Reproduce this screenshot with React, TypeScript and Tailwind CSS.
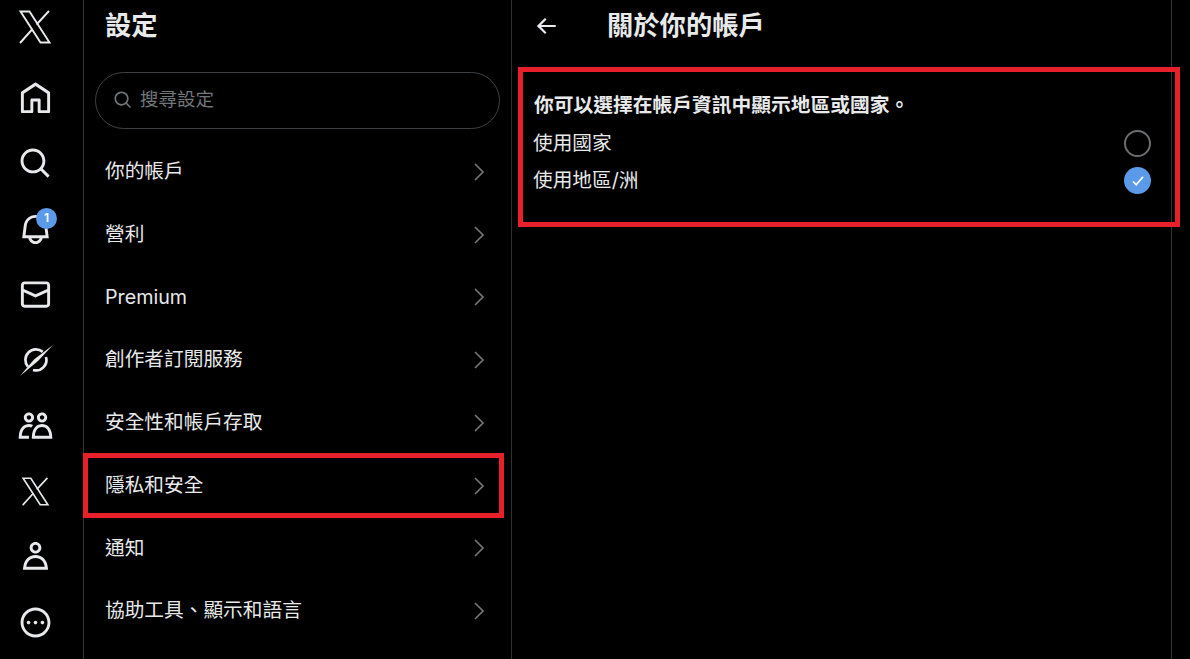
const navIcons = [
  { id: "home", d: "M21.591 7.146L12.52 1.157c-.316-.21-.724-.21-1.04 0l-9.071 5.99c-.26.173-.409.456-.409.757v13.183c0 .502.418.913.929.913h6.638c.511 0 .929-.41.929-.913v-7.075h3.008v7.075c0 .502.418.913.929.913h6.639c.51 0 .928-.41.928-.913V7.904c0-.301-.158-.584-.408-.758zM20 20l-4.5.01.011-7.097c0-.502-.418-.913-.928-.913H9.44c-.511 0-.929.41-.929.913L8.5 20H4V8.773l8.011-5.342L20 8.764z" },
  { id: "search", d: "M10.25 3.75c-3.59 0-6.5 2.91-6.5 6.5s2.91 6.5 6.5 6.5c1.795 0 3.419-.726 4.596-1.904 1.178-1.177 1.904-2.801 1.904-4.596 0-3.59-2.91-6.5-6.5-6.5zm-8.5 6.5c0-4.694 3.806-8.5 8.5-8.5s8.5 3.806 8.5 8.5c0 1.986-.682 3.815-1.824 5.262l4.781 4.781-1.414 1.414-4.781-4.781c-1.447 1.142-3.276 1.824-5.262 1.824-4.694 0-8.5-3.806-8.5-8.5z" },
  { id: "bell", d: "M19.993 9.042C19.48 5.017 16.054 2 11.996 2s-7.49 3.021-7.999 7.051L2.866 18H7.1c.463 2.282 2.481 4 4.9 4s4.437-1.718 4.9-4h4.236l-1.143-8.958zM12 20c-1.306 0-2.417-.835-2.829-2h5.658c-.412 1.165-1.523 2-2.829 2zm-6.866-4l.847-6.698C6.364 6.272 8.941 4 11.996 4s5.627 2.268 6.013 5.295L18.864 16H5.134z", badge: "1" },
  { id: "mail", d: "M1.998 5.5c0-1.381 1.119-2.5 2.5-2.5h15c1.381 0 2.5 1.119 2.5 2.5v13c0 1.381-1.119 2.5-2.5 2.5h-15c-1.381 0-2.5-1.119-2.5-2.5v-13zm2.5-.5c-.276 0-.5.224-.5.5v2.764l8 3.638 8-3.636V5.5c0-.276-.224-.5-.5-.5h-15zm15.5 5.463l-8 3.636-8-3.638V18.5c0 .276.224.5.5.5h15c.276 0 .5-.224.5-.5v-8.037z" },
  { id: "grok" },
  { id: "communities", d: "M7.501 19.917L7.471 21H.472l.029-1.027c.184-6.618 3.736-8.977 7-8.977.963 0 1.95.212 2.87.672-.444.478-.851 1.03-1.212 1.656-.507-.204-1.054-.329-1.658-.329-2.767 0-4.57 2.223-4.938 6.004H7.56c-.023.302-.05.599-.059.917zm15.998.056L23.528 21H9.472l.029-1.027c.184-6.618 3.736-8.977 7-8.977s6.816 2.358 7 8.977zM21.437 19c-.367-3.781-2.17-6.004-4.938-6.004s-4.57 2.223-4.938 6.004h9.875zm-4.938-9c-.799 0-1.527-.279-2.116-.73-.836-.64-1.384-1.638-1.384-2.77 0-1.93 1.567-3.5 3.5-3.5s3.5 1.57 3.5 3.5c0 1.132-.548 2.13-1.384 2.77-.589.451-1.317.73-2.116.73zm-1.5-3.5c0 .827.673 1.5 1.5 1.5s1.5-.673 1.5-1.5-.673-1.5-1.5-1.5-1.5.673-1.5 1.5zM7.5 3C9.433 3 11 4.57 11 6.5S9.433 10 7.5 10 4 8.43 4 6.5 5.567 3 7.5 3zm0 2C6.673 5 6 5.673 6 6.5S6.673 8 7.5 8 9 7.327 9 6.5 8.327 5 7.5 5z" },
  { id: "premium" },
  { id: "profile", d: "M5.651 19h12.698c-.337-1.8-1.023-3.21-1.945-4.19C15.318 13.65 13.838 13 12 13s-3.317.65-4.404 1.81c-.922.98-1.608 2.39-1.945 4.19zm.486-5.56C7.627 11.85 9.648 11 12 11s4.373.85 5.863 2.44c1.477 1.58 2.366 3.8 2.632 6.46l.11 1.1H3.395l.11-1.1c.266-2.66 1.155-4.88 2.632-6.46zM12 4c-1.105 0-2 .9-2 2s.895 2 2 2 2-.9 2-2-.895-2-2-2zM8 6c0-2.21 1.791-4 4-4s4 1.79 4 4-1.791 4-4 4-4-1.79-4-4z" },
  { id: "more", d: "M3.75 12c0-4.56 3.69-8.25 8.25-8.25s8.25 3.69 8.25 8.25-3.69 8.25-8.25 8.25S3.75 16.56 3.75 12zM12 1.75C6.34 1.75 1.75 6.34 1.75 12S6.34 22.25 12 22.25 22.25 17.66 22.25 12 17.66 1.75 12 1.75zm-4.75 11.5c.69 0 1.25-.56 1.25-1.25s-.56-1.25-1.25-1.25S6 11.31 6 12s.56 1.25 1.25 1.25zm9.5 0c.69 0 1.25-.56 1.25-1.25s-.56-1.25-1.25-1.25-1.25.56-1.25 1.25.56 1.25 1.25 1.25zM13.25 12c0 .69-.56 1.25-1.25 1.25s-1.25-.56-1.25-1.25.56-1.25 1.25-1.25 1.25.56 1.25 1.25z" },
];

const settings = ["你的帳戶", "營利", "Premium", "創作者訂閱服務", "安全性和帳戶存取", "隱私和安全", "通知", "協助工具、顯示和語言"];

function XMark({ className }: { className: string }) {
  return (
    <svg className={className} viewBox="0 0 34 34" fill="none" stroke="#e7e9ea" strokeWidth="1.9">
      <path d="M2.5 1.5h9L31.5 32.5h-9z" />
      <path d="M31 1L18.5 14.5M14.5 19L2 33" />
    </svg>
  );
}

function GrokIcon() {
  return (
    <svg className="h-9 w-9" viewBox="0 0 36 36" fill="none" stroke="#e7e9ea">
      <path d="M24.7 9.9A10.5 10.5 0 0 0 9.9 24.7" strokeWidth="2.7" />
      <path d="M28 15A10.5 10.5 0 0 1 15 28" strokeWidth="2.7" />
      <path d="M35 3L20 19L2 34L16 17.5Z" fill="#e7e9ea" stroke="none" />
    </svg>
  );
}

function Chevron() {
  return (
    <svg className="h-[20px] w-[12px]" viewBox="0 0 12 20" fill="none" stroke="#71767b" strokeWidth="1.7">
      <path d="M2 2l8 8-8 8" />
    </svg>
  );
}

export default function App() {
  return (
    <div className="flex h-[659px] w-[1190px] overflow-hidden bg-black text-[#e7e9ea] font-['Inter','Noto_Sans_CJK_TC',sans-serif]">
      <nav className="flex w-[84px] shrink-0 flex-col items-center border-r border-[#2f3336] pr-[13px]">
        <div className="flex h-[54px] items-center">
          <XMark className="h-[34px] w-[34px]" />
        </div>
        <div className="mt-[11.5px] flex w-full flex-col items-center pl-[1px]">
          {navIcons.map((icon) => (
            <div key={icon.id} className="relative flex h-[65.5px] items-center justify-center">
              {icon.id === "grok" && <GrokIcon />}
              {icon.id === "premium" && <XMark className="h-[29px] w-[29px]" />}
              {icon.d && (
                <svg className="h-[35px] w-[35px]" viewBox="0 0 24 24" fill="#e7e9ea">
                  <path d={icon.d} />
                </svg>
              )}
              {icon.badge && (
                <span className="absolute right-[-4px] top-[11px] flex h-[21px] w-[21px] items-center justify-center rounded-full bg-[#5b9ae8] text-[12px] font-semibold text-white">
                  {icon.badge}
                </span>
              )}
            </div>
          ))}
        </div>
      </nav>

      <section className="relative w-[428px] shrink-0 border-r border-[#2f3336]">
        <h1 className="flex h-[52px] items-center pl-[21px] text-[26.3px] font-bold">設定</h1>
        <div className="mx-[11px] mt-[20px] flex h-[57px] items-center gap-[7px] rounded-full border border-[#3e4144] pb-[2px] pl-[17px]">
          <svg className="h-[20px] w-[20px]" viewBox="0 0 24 24" fill="#71767b">
            <path d={navIcons[1].d} />
          </svg>
          <span className="text-[18.5px] text-[#71767b]">搜尋設定</span>
        </div>
        <ul className="mt-[11.5px]">
          {settings.map((label) => (
            <li key={label} className="relative flex h-[62.75px] items-center justify-between pl-[21px] pr-[26px] text-[19.7px]">
              <span>{label}</span>
              <Chevron />
              {label === "隱私和安全" && (
                <span className="absolute inset-y-[-1px] left-[-1px] right-[7px] border-[5px] border-[#e8202a]" />
              )}
            </li>
          ))}
        </ul>
      </section>

      <main className="w-[660px] shrink-0 border-r border-[#2f3336]">
        <header className="flex h-[52px] items-center pl-[21px]">
          <svg className="h-[26px] w-[26px]" viewBox="0 0 24 24" fill="#e7e9ea">
            <path d="M7.414 13l5.043 5.04-1.414 1.42L3.586 12l7.457-7.46 1.414 1.42L7.414 11H21v2H7.414z" />
          </svg>
          <h2 className="ml-[48px] text-[26.3px] font-bold">關於你的帳戶</h2>
        </header>
        <div className="relative ml-[6px] mt-[15px] h-[160px] w-[662px] pl-[16px] pr-[29px] pt-[25px]">
          <p className="flex h-[28px] items-center text-[19.75px] font-bold">你可以選擇在帳戶資訊中顯示地區或國家。</p>
          <div className="mt-[5px] flex h-[37px] items-center justify-between text-[19.7px]">
            <span className="-ml-px">使用國家</span>
            <span className="h-[27px] w-[27px] rounded-full border-2 border-[#6b6f73]" />
          </div>
          <div className="flex h-[37px] items-center justify-between text-[19.7px]">
            <span className="-ml-px">使用地區/洲</span>
            <span className="flex h-[27px] w-[27px] items-center justify-center rounded-full bg-[#5b9ae8]">
              <svg className="h-[16px] w-[16px]" viewBox="0 0 16 16" fill="none" stroke="#fff" strokeWidth="1.7">
                <path d="M3 8.5l3.2 3.2L13 3.8" />
              </svg>
            </span>
          </div>
          <span className="absolute inset-0 border-[5px] border-[#e8202a]" />
        </div>
      </main>
    </div>
  );
}
